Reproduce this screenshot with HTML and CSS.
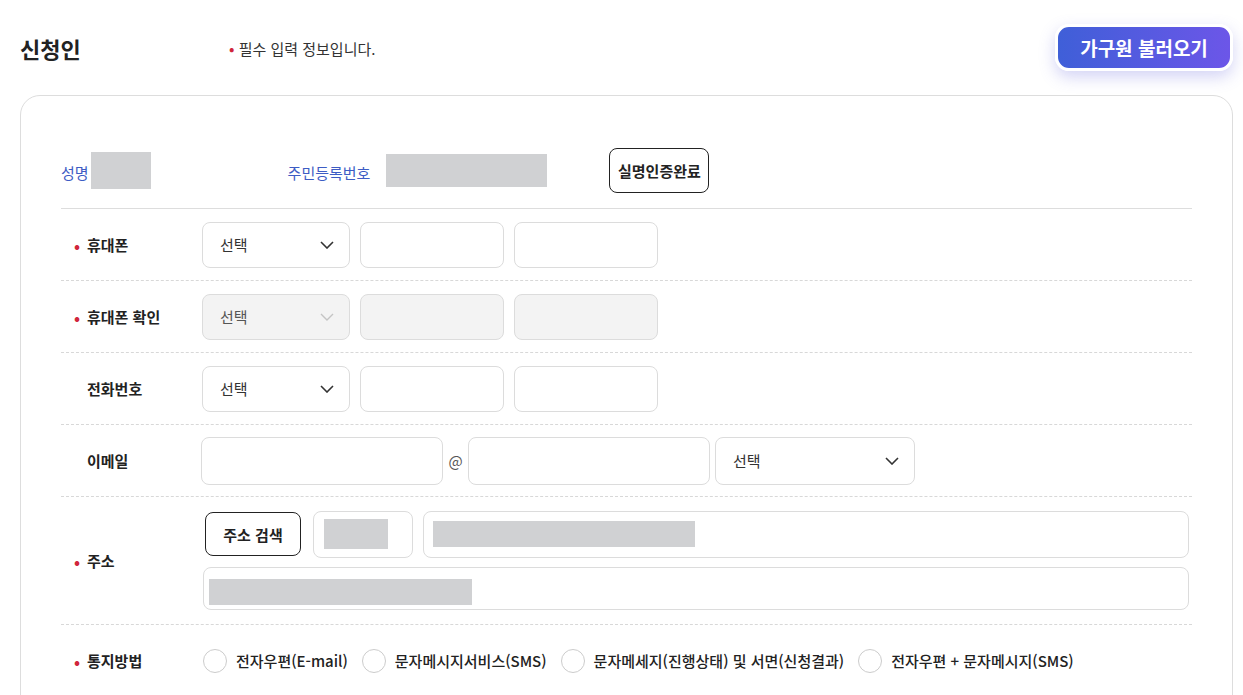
FILE: index.html
```html
<!DOCTYPE html>
<html lang="ko">
<head>
  <meta charset="UTF-8" />
  <title>신청인</title>
  <link rel="stylesheet" href="styles.css">
</head>
<body>

  <header class="top">
    <h2 class="title">신청인</h2>
    <p class="note"><span class="dot">•</span> 필수 입력 정보입니다.</p>
    <button class="family-btn">가구원 불러오기</button>
  </header>

  <section class="card">
    <div class="info">
      <span class="info-label">성명</span>
      <span class="mask mask-name"></span>
      <span class="info-label label-jumin">주민등록번호</span>
      <span class="mask mask-jumin"></span>
      <button class="btn-line btn-auth">실명인증완료</button>
    </div>

    <div class="row">
      <div class="label req">휴대폰</div>
      <div class="ctrls">
        <div class="select">선택 <svg width="14" height="8" viewBox="0 0 14 8"><path d="M1 1l6 6 6-6" fill="none" stroke="#333" stroke-width="1.6"/></svg></div>
        <div class="input"></div>
        <div class="input"></div>
      </div>
    </div>

    <div class="row">
      <div class="label req">휴대폰 확인</div>
      <div class="ctrls">
        <div class="select disabled">선택 <svg width="14" height="8" viewBox="0 0 14 8"><path d="M1 1l6 6 6-6" fill="none" stroke="#c4c4c4" stroke-width="1.4"/></svg></div>
        <div class="input disabled"></div>
        <div class="input disabled"></div>
      </div>
    </div>

    <div class="row">
      <div class="label">전화번호</div>
      <div class="ctrls">
        <div class="select">선택 <svg width="14" height="8" viewBox="0 0 14 8"><path d="M1 1l6 6 6-6" fill="none" stroke="#333" stroke-width="1.6"/></svg></div>
        <div class="input"></div>
        <div class="input"></div>
      </div>
    </div>

    <div class="row">
      <div class="label">이메일</div>
      <div class="ctrls email">
        <div class="input mail"></div>
        <span class="at">@</span>
        <div class="input mail"></div>
        <div class="select mail-sel">선택 <svg width="14" height="8" viewBox="0 0 14 8"><path d="M1 1l6 6 6-6" fill="none" stroke="#333" stroke-width="1.6"/></svg></div>
      </div>
    </div>

    <div class="row addr-row">
      <div class="label req">주소</div>
      <div class="addr">
        <div class="addr-line">
          <button class="btn-line btn-addr">주소 검색</button>
          <div class="input zip"><span class="mask mask-zip"></span></div>
          <div class="input addr1"><span class="mask mask-addr1"></span></div>
        </div>
        <div class="input addr2"><span class="mask mask-addr2"></span></div>
      </div>
    </div>

    <div class="row last">
      <div class="label req">통지방법</div>
      <div class="radios">
        <label class="radio"><span class="circle"></span>전자우편(E-mail)</label>
        <label class="radio"><span class="circle"></span>문자메시지서비스(SMS)</label>
        <label class="radio"><span class="circle"></span>문자메세지(진행상태) 및 서면(신청결과)</label>
        <label class="radio"><span class="circle"></span>전자우편 + 문자메시지(SMS)</label>
      </div>
    </div>
  </section>

</body>
</html>
```

FILE: styles.css
```css
body { margin:0; font-family:"Noto Sans CJK KR", "Noto Sans", sans-serif; color:#222; background:#fff; }
button { font-family:inherit; cursor:pointer; }

.top { display:flex; align-items:center; height:47px; padding:24px 10px 0 20px; margin-bottom:24px; }
.title { width:209px; margin:0; font-size:22px; font-weight:700; color:#222; }
.note { margin:0; font-size:15px; color:#333; flex:1; }
.dot { color:#d0263b; font-size:16px; }
.family-btn { width:178px; height:47px; border:3px solid #fff; border-radius:14px; color:#fff; font-size:19px; font-weight:700;
  background:linear-gradient(90deg, #3f5fd8, #6c56e8); box-shadow:0 6px 16px rgba(96,96,220,0.28); }

.card { margin:0 10px 0 20px; border:1px solid #ddd; border-radius:20px; padding:37px 40px 0 40px; height:600px; }

.info { display:flex; align-items:center; height:75px; border-bottom:1px solid #ddd; }
.info-label { color:#3d5cc4; font-size:15px; margin-top:4px; }
.mask { display:inline-block; background:#d0d1d3; }
.mask-name { width:60px; height:37px; margin-left:2px; }
.label-jumin { margin-left:137px; }
.mask-jumin { width:161px; height:33px; margin-left:16px; }
.btn-line { background:#fff; border:1px solid #222; border-radius:8px; font-size:15px; font-weight:700; color:#222; }
.btn-auth { width:100px; height:45px; margin-left:62px; }

.row { display:grid; grid-template-columns:140px 1fr; align-items:center; min-height:71px; border-bottom:1px dashed #d8d8d8; }
.row.last { border-bottom:none; }
.label { font-size:15px; font-weight:700; padding-left:26px; position:relative; }
.label.req::before { content:"•"; color:#d0263b; position:absolute; left:13px; font-size:16px; top:-1px; }

.ctrls { display:flex; gap:10px; align-items:center; padding-left:1px; }
.input, .select { box-sizing:border-box; height:46px; border:1px solid #dcdcdc; border-radius:8px; background:#fff; }
.input { width:144px; }
.select { width:148px; display:flex; align-items:center; justify-content:space-between; padding:0 15px 0 17px; font-size:15px; color:#333; }
.disabled { background:#f3f3f3; }
.select.disabled { color:#555; }

.email { gap:0; padding-left:0; }
.mail { width:242px; height:48px; }
.at { width:25px; text-align:center; font-size:15px; color:#555; }
.mail-sel { width:200px; height:48px; margin-left:5px; }

.addr-row { min-height:127px; }
.addr { display:flex; flex-direction:column; gap:9px; padding:13px 3px 14px 0; }
.addr-line { display:flex; align-items:center; gap:10px; }
.btn-addr { width:96px; height:44px; margin-left:4px; margin-right:2px; }
.zip { width:100px; height:47px; display:flex; align-items:center; padding-left:10px; }
.mask-zip { width:64px; height:30px; }
.addr1 { flex:1; height:47px; display:flex; align-items:center; padding-left:9px; }
.mask-addr1 { width:262px; height:26px; }
.addr2 { width:auto; margin-left:2px; height:43px; display:flex; align-items:flex-end; padding:0 0 4px 5px; }
.mask-addr2 { width:263px; height:26px; }

.radios { display:flex; align-items:center; gap:12px; }
.radio { display:flex; align-items:center; font-size:15px; font-weight:500; color:#222; }
.circle { width:24px; height:24px; box-sizing:border-box; border:1px solid #ccc; border-radius:50%; margin-right:9px; margin-left:2px; }
```
